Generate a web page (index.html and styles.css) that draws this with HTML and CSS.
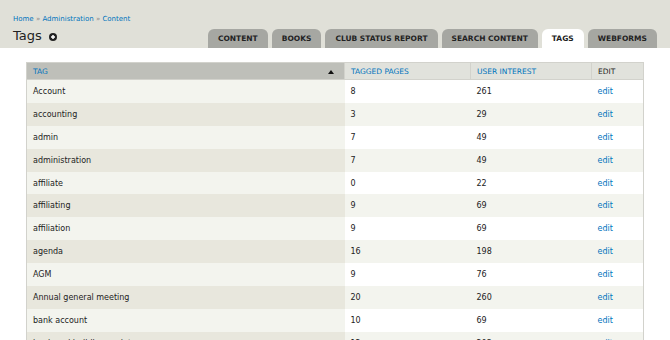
FILE: index.html
```html
<!DOCTYPE html>
<html lang="en">
<head>
    <meta charset="UTF-8">
    <title>Tags</title>
    <link rel="stylesheet" href="styles.css">
</head>
<body>
    <div class="branding">
        <div class="breadcrumb">
            <a href="#">Home</a> <span class="sep">»</span> <a href="#">Administration</a> <span class="sep">»</span> <a href="#">Content</a>
        </div>
        <div class="title-row">
            <h1 class="page-title">Tags <span class="add-icon">
                <svg width="8" height="8" viewBox="0 0 8 8"><circle cx="4" cy="4" r="4" fill="#222"/><path d="M4 2v4M2 4h4" stroke="#fff" stroke-width="1.5"/></svg>
            </span></h1>
            <ul class="tabs">
                <li><a href="#">Content</a></li>
                <li><a href="#">Books</a></li>
                <li><a href="#">Club status report</a></li>
                <li><a href="#">Search content</a></li>
                <li class="active"><a href="#">Tags</a></li>
                <li><a href="#">Webforms</a></li>
            </ul>
        </div>
    </div>

    <div class="page">
        <table class="tag-table">
            <thead>
                <tr>
                    <th class="col-tag sorted"><a href="#">Tag</a><span class="arrow"></span></th>
                    <th class="col-pages"><a href="#">Tagged pages</a></th>
                    <th class="col-interest"><a href="#">User interest</a></th>
                    <th class="col-edit">Edit</th>
                </tr>
            </thead>
            <tbody>
                <tr><td class="sorted">Account</td><td>8</td><td>261</td><td><a href="#">edit</a></td></tr>
                <tr><td class="sorted">accounting</td><td>3</td><td>29</td><td><a href="#">edit</a></td></tr>
                <tr><td class="sorted">admin</td><td>7</td><td>49</td><td><a href="#">edit</a></td></tr>
                <tr><td class="sorted">administration</td><td>7</td><td>49</td><td><a href="#">edit</a></td></tr>
                <tr><td class="sorted">affiliate</td><td>0</td><td>22</td><td><a href="#">edit</a></td></tr>
                <tr><td class="sorted">affiliating</td><td>9</td><td>69</td><td><a href="#">edit</a></td></tr>
                <tr><td class="sorted">affiliation</td><td>9</td><td>69</td><td><a href="#">edit</a></td></tr>
                <tr><td class="sorted">agenda</td><td>16</td><td>198</td><td><a href="#">edit</a></td></tr>
                <tr><td class="sorted">AGM</td><td>9</td><td>76</td><td><a href="#">edit</a></td></tr>
                <tr><td class="sorted">Annual general meeting</td><td>20</td><td>260</td><td><a href="#">edit</a></td></tr>
                <tr><td class="sorted">bank account</td><td>10</td><td>69</td><td><a href="#">edit</a></td></tr>
                <tr><td class="sorted">bank and building society</td><td>12</td><td>203</td><td><a href="#">edit</a></td></tr>
            </tbody>
        </table>
    </div>
</body>
</html>
```

FILE: styles.css
```css
body {
    margin: 0;
    font-family: "DejaVu Sans", Verdana, sans-serif;
    font-size: 8px;
    color: #222;
    background: #fff;
}
a {
    color: #0074bd;
    text-decoration: none;
}

/* header strip */
.branding {
    background-color: #e0e0d8;
    padding: 14px 13px 0 13px;
    height: 34px;
}
.breadcrumb {
    font-size: 7px;
    line-height: 10px;
}
.breadcrumb .sep {
    color: #888;
}
.title-row {
    display: flex;
    justify-content: space-between;
    align-items: flex-end;
    height: 24px;
}
.page-title {
    margin: 0 0 4px 0;
    font-size: 13px;
    font-weight: normal;
    line-height: 16px;
    display: flex;
    align-items: center;
    gap: 7px;
}
.add-icon {
    display: flex;
    margin-top: 2px;
}
.tabs {
    list-style: none;
    display: flex;
    gap: 4px;
    margin: 0;
    padding: 0;
}
.tabs li a {
    display: block;
    height: 19px;
    line-height: 20px;
    padding: 0 10px;
    background-color: #a6a7a2;
    border-radius: 6px 6px 0 0;
    color: #222;
    font-weight: bold;
    text-transform: uppercase;
    font-size: 7.5px;
}
.tabs li.active a {
    background-color: #fff;
}

/* table */
.page {
    padding: 14px 26px 0 26px;
}
.tag-table {
    width: 100%;
    border-collapse: collapse;
    border: 1px solid #d2d2cc;
}
.tag-table th {
    background-color: #e1e2dc;
    text-align: left;
    font-weight: normal;
    text-transform: uppercase;
    height: 16px;
    padding: 0 6px;
    border-left: 1px solid #d2d2cc;
    border-bottom: 1px solid #d2d2cc;
    font-size: 7.5px;
}
.tag-table th.sorted {
    background-color: #bebfb9;
    position: relative;
}
.tag-table th .arrow {
    position: absolute;
    right: 10px;
    top: 7px;
    border-left: 3.5px solid transparent;
    border-right: 3.5px solid transparent;
    border-bottom: 4px solid #111;
}
.col-tag { width: 305px; }
.col-pages { width: 113px; }
.col-interest { width: 108px; }

.tag-table td {
    height: 22.9px;
    padding: 0 6px;
    background-color: #fff;
}
.tag-table td.sorted {
    background-color: #f3f4ee;
}
.tag-table tbody tr:nth-child(even) td {
    background-color: #f3f4ee;
}
.tag-table tbody tr:nth-child(even) td.sorted {
    background-color: #e8e7dd;
}
```
